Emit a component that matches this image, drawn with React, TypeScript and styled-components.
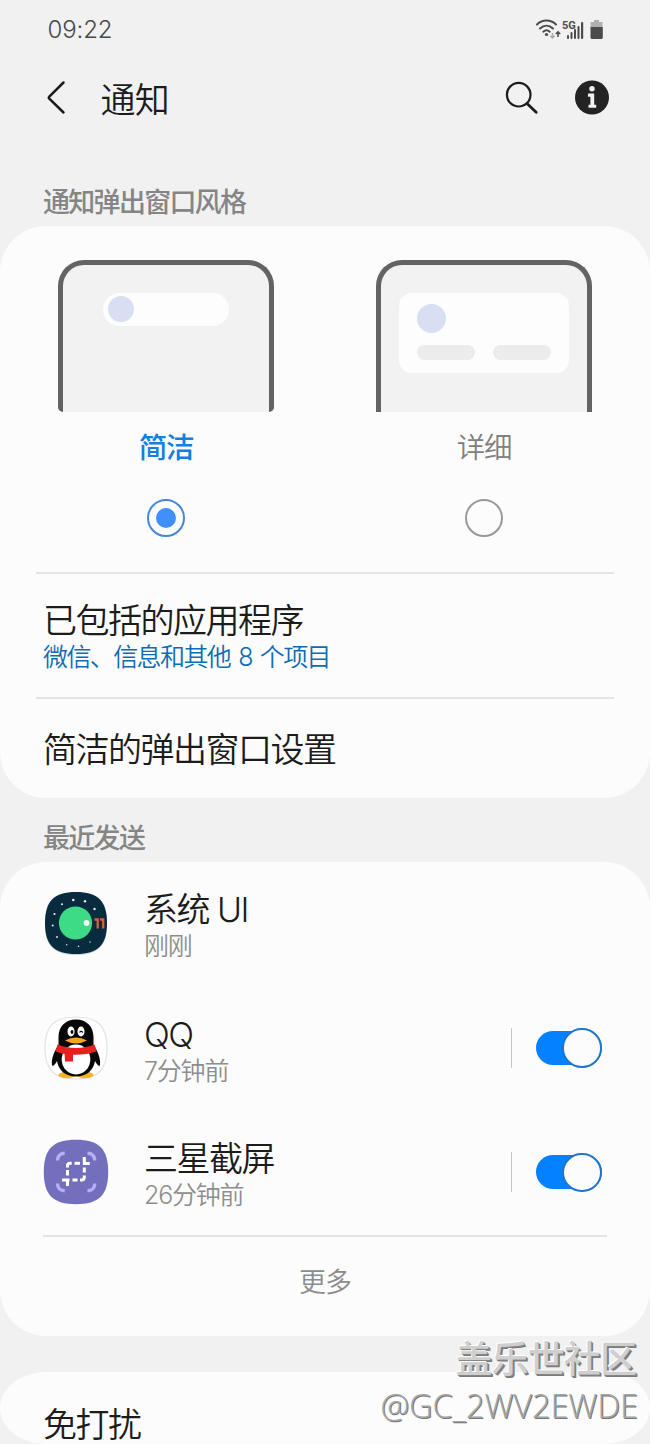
import {type ReactNode} from 'react'
import styled, {createGlobalStyle, css} from 'styled-components'

const FONT = `'Noto Sans CJK SC', sans-serif`
const LATIN = `Inter, 'Noto Sans CJK SC', sans-serif`

const GlobalStyle = createGlobalStyle`
  * {
    box-sizing: border-box;
  }

  body {
    margin: 0;
    background: #f1f1f1;
    font-family: ${FONT};
    color: #1c1c1c;
  }
`

const Screen = styled.div`
  position: relative;
  width: 650px;
  height: 1444px;
  overflow: hidden;
  display: flex;
  flex-direction: column;
  background: #f1f1f1;
`

const StatusBar = styled.div`
  flex: none;
  display: flex;
  align-items: center;
  justify-content: space-between;
  height: 58px;
  padding: 0 44px 0 47.5px;
`

const Clock = styled.span`
  font-family: ${LATIN};
  font-size: 24px;
  font-weight: 350;
  color: #484848;
  letter-spacing: -0.1px;
`

const Header = styled.header`
  flex: none;
  display: flex;
  align-items: center;
  height: 80px;
  padding: 0 40px 0 46px;
`

const Title = styled.h1`
  flex: 1;
  margin: 0 0 0 33.5px;
  font-size: 35px;
  font-weight: 350;
  line-height: 44px;
  letter-spacing: -0.8px;
`

const HeaderIcons = styled.div`
  display: flex;
  align-items: center;
  gap: 35px;
`

const SectionTitle = styled.h2<{$height: number}>`
  flex: none;
  display: flex;
  align-items: flex-end;
  height: ${(props) => props.$height}px;
  margin: 0;
  padding: 0 43px 7px;
  font-size: 27px;
  font-weight: 500;
  line-height: 36px;
  letter-spacing: -1.7px;
  color: #858585;
`

const Card = styled.section<{$height: number; $radius?: string}>`
  flex: none;
  display: flex;
  flex-direction: column;
  height: ${(props) => props.$height}px;
  border-radius: ${(props) => props.$radius || '46px'};
  background: #fcfcfc;
`

const StyleOptions = styled.div`
  display: grid;
  grid-template-columns: 216px 216px;
  column-gap: 102px;
  height: 346px;
  padding: 34px 0 0 58px;
`

const StyleOption = styled.div`
  display: flex;
  flex-direction: column;
  align-items: center;
`

const PhoneFrame = styled.div<{$rounded?: boolean}>`
  display: flex;
  justify-content: center;
  align-items: flex-start;
  width: 216px;
  height: 152px;
  padding-top: 27.5px;
  border: 5.5px solid #636363;
  border-bottom: 0;
  border-radius: 26px 26px ${(props) => (props.$rounded ? '5px 5px' : '0 0')};
  background: #f2f2f2;
`

const BriefPopup = styled.div`
  display: flex;
  align-items: center;
  width: 126px;
  height: 33px;
  padding-left: 5px;
  border-radius: 17px;
  background: #fdfdfd;
`

const DetailedPopup = styled.div`
  display: grid;
  grid-template-columns: 58px 58px;
  column-gap: 18px;
  row-gap: 12px;
  align-content: start;
  width: 170px;
  height: 80px;
  padding: 11px 18px;
  border-radius: 13px;
  background: #fdfdfd;
`

const Dot = styled.div<{$size: number}>`
  grid-column: 1 / -1;
  width: ${(props) => props.$size}px;
  height: ${(props) => props.$size}px;
  border-radius: 50%;
  background: #d9dff2;
`

const Bar = styled.div`
  height: 15px;
  border-radius: 8px;
  background: #ececec;
`

const OptionLabel = styled.div<{$selected?: boolean}>`
  margin-top: 13px;
  font-size: 28.5px;
  line-height: 42px;
  letter-spacing: -1.3px;
  font-weight: ${(props) => (props.$selected ? 500 : 350)};
  color: ${(props) => (props.$selected ? '#1180de' : '#808080')};
`

const Radio = styled.div<{$selected?: boolean}>`
  display: flex;
  align-items: center;
  justify-content: center;
  width: 38px;
  height: 38px;
  margin-top: 32px;
  border: 2px solid #999;
  border-radius: 50%;

  ${(props) =>
    props.$selected &&
    css`
      border-color: #4287d9;

      &::after {
        content: '';
        width: 20px;
        height: 20px;
        border-radius: 50%;
        background: #418ffb;
      }
    `}
`

const Divider = styled.div<{$inset: number}>`
  flex: none;
  height: 2px;
  margin: 0 ${(props) => props.$inset}px;
  background: #e4e4e4;
`

const SettingRow = styled.div<{$height: number}>`
  flex: none;
  display: flex;
  flex-direction: column;
  justify-content: center;
  height: ${(props) => props.$height}px;
  padding: 3px 43px 0;
`

const RowTitle = styled.div`
  font-family: ${LATIN};
  font-size: 34px;
  font-weight: 350;
  line-height: 40px;
  letter-spacing: -1.5px;
`

const Summary = styled.div`
  font-family: ${LATIN};
  font-size: 25px;
  font-weight: 350;
  line-height: 32px;
  letter-spacing: -1.6px;
  word-spacing: 2.5px;
  color: #0d6cb4;
`

const AppList = styled.div`
  margin-top: -1px;
`

const AppRow = styled.div`
  display: flex;
  align-items: center;
  height: 124.5px;
  padding: 0 48.5px 0 43px;
`

const AppText = styled.div`
  flex: 1;
  margin-left: 35px;
  padding-top: 6px;
`

const AppTime = styled.div`
  font-family: ${LATIN};
  font-size: 25px;
  font-weight: 350;
  line-height: 32px;
  letter-spacing: -1.2px;
  color: #8e8e8e;
`

const SwitchGroup = styled.div`
  display: flex;
  align-items: center;
  gap: 24px;
  height: 40px;

  &::before {
    content: '';
    width: 1.5px;
    height: 40px;
    background: #c4c4c4;
  }
`

const Track = styled.div`
  display: flex;
  align-items: center;
  justify-content: flex-end;
  width: 65.5px;
  height: 34px;
  border-radius: 17px;
  background: #0381fe;
`

const Knob = styled.div`
  flex: none;
  width: 39.5px;
  height: 39.5px;
  border: 2px solid #1f76cf;
  border-radius: 50%;
  background: #fcfcfc;
`

const MoreButton = styled.div`
  display: flex;
  align-items: center;
  justify-content: center;
  height: 88px;
  font-size: 27px;
  font-weight: 350;
  letter-spacing: -1px;
  color: #8c8c8c;
`

const Gap = styled.div`
  flex: none;
  height: 36px;
`

const Watermark = styled.div`
  position: absolute;
  right: 12px;
  bottom: 16px;
  display: flex;
  flex-direction: column;
  align-items: flex-end;
  white-space: nowrap;
`

const WatermarkName = styled.div`
  margin-right: 2px;
  font-size: 37px;
  font-weight: 500;
  line-height: 49px;
  letter-spacing: -0.9px;
  color: #cfcfcf;
  text-shadow:
    -1px -1px 0 #fff,
    1px 1px 0 #858585,
    2px 2px 0 #7c7c7c;
`

const WatermarkUser = styled.div`
  font-family: 'Open Sans', sans-serif;
  font-size: 32.4px;
  font-weight: 300;
  line-height: 46px;
  color: #a5a5a5;
  text-shadow: 1px 1px 0 #777;
`

function StatusIcons() {
  return (
    <svg width="70" height="24" viewBox="0 0 70 24" fill="none">
      <g stroke="#4b4b4b" strokeWidth="2" strokeLinecap="round">
        <path d="M1 7.5C6.5 2.3 14.500 2.300 20 7.500" />
        <path d="M4 11.500C8 7.700 13 7.700 17 11.500" />
        <path d="M7.300 14.700C9.300 12.900 11.700 12.900 13.700 14.700" />
      </g>
      <circle cx="10.500" cy="17.500" r="1.600" fill="#4b4b4b" />
      <path d="M16.500 16v5M14.300 18.800l2.200 2.200 2.200-2.200" stroke="#aaa" strokeWidth="1.500" />
      <path d="M22 20v-5M19.800 17l2.200-2.200 2.200 2.200" stroke="#4b4b4b" strokeWidth="1.500" />
      <text x="26" y="11.500" fontFamily="Roboto" fontSize="11" fontWeight="700" fill="#4b4b4b">
        5G
      </text>
      <g fill="#4b4b4b">
        <rect x="31" y="18" width="2" height="4" rx="1" />
        <rect x="34.500" y="15" width="2" height="7" rx="1" />
        <rect x="38" y="12" width="2" height="10" rx="1" />
        <rect x="41.500" y="9" width="2" height="13" rx="1" />
        <rect x="45" y="5" width="2.200" height="17" rx="1" />
      </g>
      <path d="M58 3h5v2h3.500v5H54.500V5H58z" fill="#b0b0b0" />
      <path d="M54.500 10h12.300v10.500q0 1.500-1.500 1.500H56q-1.500 0-1.500-1.500z" fill="#4b4b4b" />
    </svg>
  )
}

function BackIcon() {
  return (
    <svg width="21" height="36" viewBox="0 0 21 36" fill="none">
      <path
        d="M17.500 2.500L3.300 16.700q-1 1 0 2L17.500 32.500"
        stroke="#1c1c1c"
        strokeWidth="2.500"
        strokeLinecap="round"
      />
    </svg>
  )
}

function SearchIcon() {
  return (
    <svg width="34" height="34" viewBox="0 0 34 34" fill="none" stroke="#1c1c1c">
      <circle cx="13.700" cy="13.700" r="11.800" strokeWidth="2.200" />
      <path d="M22 22.500l9.200 8.800" strokeWidth="2.800" strokeLinecap="round" />
    </svg>
  )
}

function InfoIcon() {
  return (
    <svg width="36" height="36" viewBox="0 0 36 36">
      <circle cx="18" cy="17.500" r="17" fill="#232323" />
      <circle cx="18" cy="8.800" r="2.700" fill="#f1f1f1" />
      <path d="M14 13.500h6.200v11.300h2v3H14.500v-3h1.900V16.800H14z" fill="#f1f1f1" />
    </svg>
  )
}

const SQUIRCLE = 'M33 2C55 2 64 11 64 33S55 64 33 64 2 55 2 33 11 2 33 2z'

const STARS: [number, number, number][] = [
  [30.300, 10, 1.300],
  [42, 11.200, 1.200],
  [19, 14.300, 1],
  [51.500, 19, 1.200],
  [11.500, 24, 1.100],
  [9.700, 35.500, 1],
  [14, 47, 0.900],
  [23.700, 54.700, 0.700],
  [35.500, 56.300, 0.800],
  [47, 52, 0.700],
]

function SystemUiIcon() {
  return (
    <svg width="66" height="66" viewBox="0 0 66 66">
      <path d={SQUIRCLE} fill="#c9d3d6" transform="translate(0 1)" />
      <path d={SQUIRCLE} fill="#082b3d" />
      <circle cx="32.500" cy="33" r="16.600" fill="#3ddb85" />
      <circle cx="43.500" cy="33" r="2.900" fill="#f4fff9" />
      {STARS.map(([x, y, r]) => (
        <circle key={`${x}-${y}`} cx={x} cy={y} r={r} fill="#e6f0f2" />
      ))}
      <path d="M51.500 29.500h3.200v9M57 29.500h3.200v9" fill="none" stroke="#d9603c" strokeWidth="2.300" />
    </svg>
  )
}

function QQIcon() {
  return (
    <svg width="66" height="66" viewBox="0 0 66 66">
      <path d={SQUIRCLE} fill="#fff" stroke="#e3e3e3" strokeWidth="1.200" />
      <ellipse cx="24" cy="60" rx="8.500" ry="3.200" fill="#f5b32c" />
      <ellipse cx="42" cy="60" rx="8.500" ry="3.200" fill="#f5b32c" />
      <path
        d="M33 4.500C22 4.500 15.500 12 15.500 22v8C12 35 8 43 9 50c.5 2.500 3.500-1 5-4 1.500 9 8 15.500 19 15.500S50.500 55 52 46c1.500 3 4.500 6.500 5 4 1-7-3-15-6.500-20v-8C50.500 12 44 4.500 33 4.500z"
        fill="#080808"
      />
      <ellipse cx="33" cy="44.500" rx="14.300" ry="15" fill="#fff" />
      <path d="M14.500 29.500C25 34 41 34 51.500 29.500l2.300 6.800C42 41 24 41 12.500 36.500z" fill="#e5201f" />
      <path d="M21.500 37h8.500v9.500h-8z" fill="#e5201f" />
      <ellipse cx="28" cy="16.500" rx="3.500" ry="5" fill="#fff" />
      <ellipse cx="38" cy="16.500" rx="3.500" ry="5" fill="#fff" />
      <ellipse cx="29" cy="17" rx="1.400" ry="2" fill="#080808" />
      <path d="M36.500 17.500q1.500-2.200 3.300 0" fill="none" stroke="#080808" strokeWidth="1.200" />
      <path d="M22 25.500Q33 19.500 44 25.500Q33 31.500 22 25.500z" fill="#f5a81e" />
    </svg>
  )
}

function ScreenshotIcon() {
  return (
    <svg width="66" height="66" viewBox="0 0 66 66" fill="none">
      <path d="M33 .8C56 .8 65.200 10 65.200 33S56 65.200 33 65.200.8 56 .8 33 10 .8 33 .8z" fill="#746fbd" />
      <g stroke="#b5aff8" strokeWidth="3.400">
        <path d="M14.500 21.500c0-4.500 3-7.300 7.200-7.300" />
        <path d="M44.500 14.200c4.500 0 7.300 2.800 7.300 7.300" />
        <path d="M14.500 44.500c0 4.500 3 7.300 7.200 7.300" />
        <path d="M44.500 51.800c4.500 0 7.300-2.800 7.300-7.300" />
      </g>
      <g stroke="#fff" strokeWidth="3">
        <path d="M24.500 28.500V27q0-2.700 2.700-2.700h1.500" />
        <path d="M31.500 24.300h5.500" />
        <path d="M24.500 31v5.500" />
        <path d="M41.300 18v6.500h5.400" />
        <path d="M41.300 28.500v5" />
        <path d="M41.300 36.500v1.800q0 2.700-2.700 2.700H37" />
        <path d="M29.500 41h5" />
        <path d="M19 41h7.500M24.500 41v6" />
      </g>
    </svg>
  )
}

interface AppItemProps {
  icon: ReactNode
  name: string
  time: string
  enabled?: boolean
}

function AppItem(props: AppItemProps) {
  const {icon, name, time, enabled} = props

  return (
    <AppRow>
      {icon}
      <AppText>
        <RowTitle>{name}</RowTitle>
        <AppTime>{time}</AppTime>
      </AppText>
      {enabled && (
        <SwitchGroup>
          <Track>
            <Knob />
          </Track>
        </SwitchGroup>
      )}
    </AppRow>
  )
}

export default function App() {
  return (
    <>
      <GlobalStyle />
      <Screen>
        <StatusBar>
          <Clock>09:22</Clock>
          <StatusIcons />
        </StatusBar>

        <Header>
          <BackIcon />
          <Title>通知</Title>
          <HeaderIcons>
            <SearchIcon />
            <InfoIcon />
          </HeaderIcons>
        </Header>

        <SectionTitle $height={88}>通知弹出窗口风格</SectionTitle>
        <Card $height={572}>
          <StyleOptions>
            <StyleOption>
              <PhoneFrame $rounded>
                <BriefPopup>
                  <Dot $size={26} />
                </BriefPopup>
              </PhoneFrame>
              <OptionLabel $selected>简洁</OptionLabel>
              <Radio $selected />
            </StyleOption>
            <StyleOption>
              <PhoneFrame>
                <DetailedPopup>
                  <Dot $size={29} />
                  <Bar />
                  <Bar />
                </DetailedPopup>
              </PhoneFrame>
              <OptionLabel>详细</OptionLabel>
              <Radio />
            </StyleOption>
          </StyleOptions>
          <Divider $inset={36} />
          <SettingRow $height={123}>
            <RowTitle>已包括的应用程序</RowTitle>
            <Summary>微信、信息和其他 8 个项目</Summary>
          </SettingRow>
          <Divider $inset={36} />
          <SettingRow $height={99}>
            <RowTitle>简洁的弹出窗口设置</RowTitle>
          </SettingRow>
        </Card>

        <SectionTitle $height={64}>最近发送</SectionTitle>
        <Card $height={474}>
          <AppList>
            <AppItem icon={<SystemUiIcon />} name="系统 UI" time="刚刚" />
            <AppItem icon={<QQIcon />} name="QQ" time="7分钟前" enabled />
            <AppItem icon={<ScreenshotIcon />} name="三星截屏" time="26分钟前" enabled />
          </AppList>
          <Divider $inset={43} />
          <MoreButton>更多</MoreButton>
        </Card>

        <Gap />
        <Card $height={72} $radius="46px / 36px">
          <SettingRow $height={102}>
            <RowTitle>免打扰</RowTitle>
          </SettingRow>
        </Card>

        <Watermark>
          <WatermarkName>盖乐世社区</WatermarkName>
          <WatermarkUser>@GC_2WV2EWDE</WatermarkUser>
        </Watermark>
      </Screen>
    </>
  )
}
